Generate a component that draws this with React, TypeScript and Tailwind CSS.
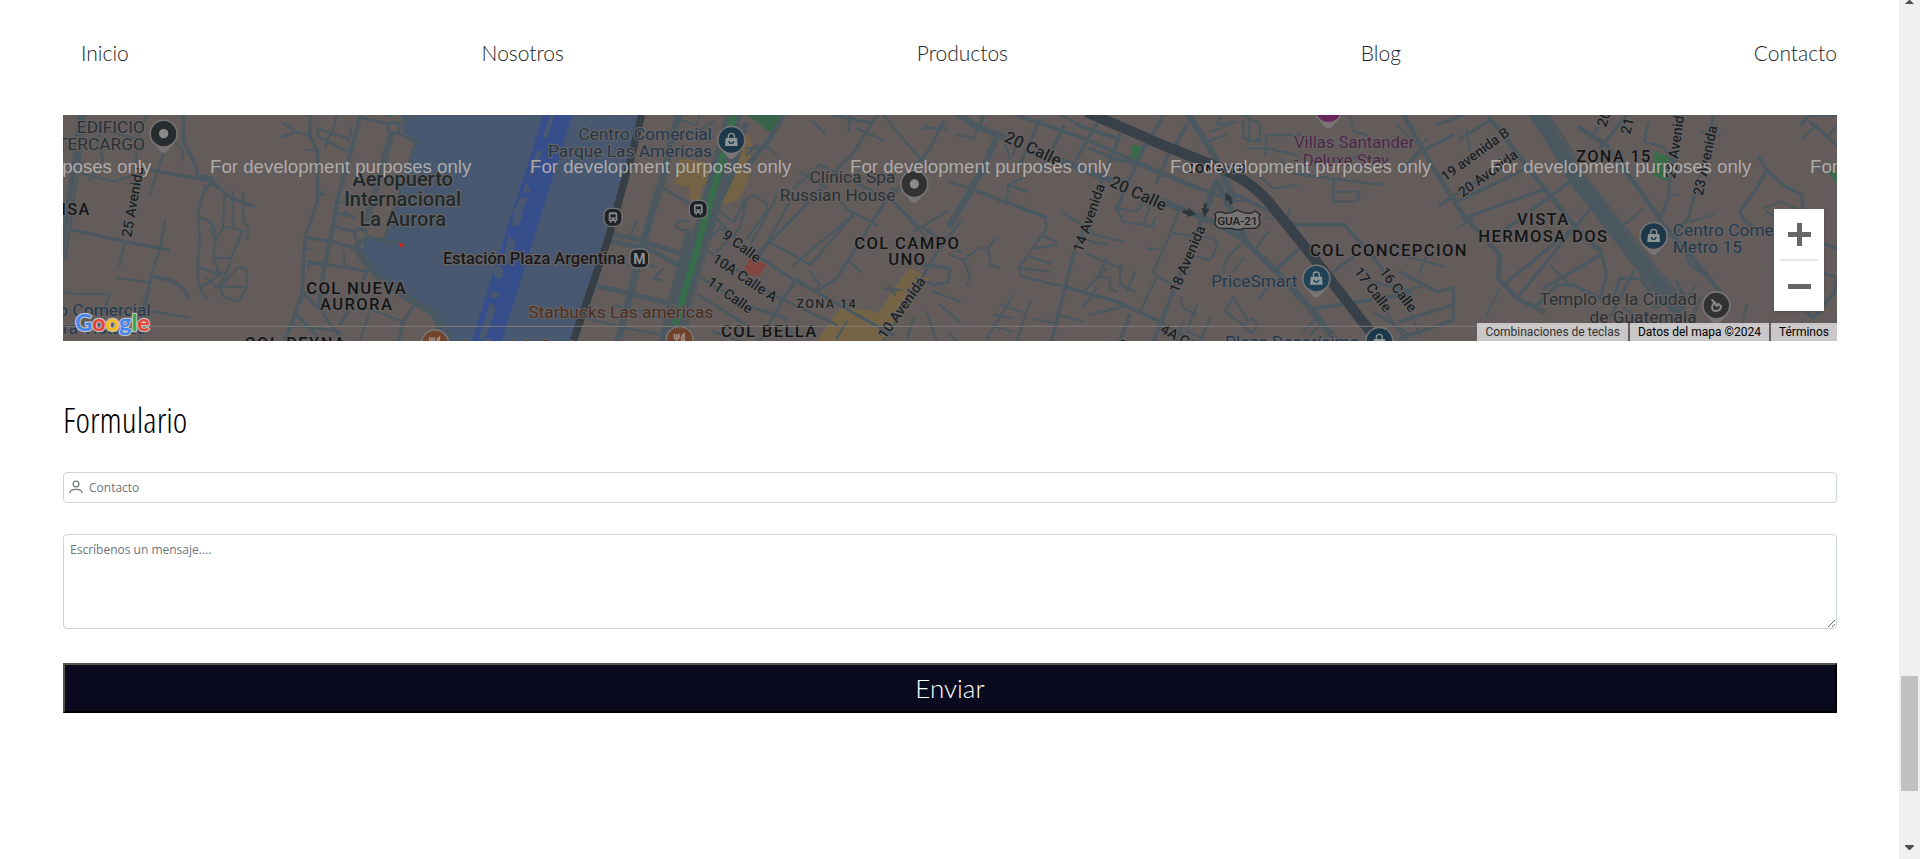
const links = ["Inicio", "Nosotros", "Productos", "Blog", "Contacto"];

type RoadSet = { x: number; w: number; d: string };

/* Streets, grouped by map section (x offset) and stroke width. */
const roads: RoadSet[] = [
  { x: 0, w: 26, d: "M95 30L83 140L65 260L50 370L39 450" },
  { x: 0, w: 13, d: "M929 40L900 150L865 270L848 370L822 490L808 600" },
  { x: 0, w: 20, d: "M1030 68L1018 110L985 225L955 330L932 390M932 390L920 430L945 470L990 520L1050 565L1150 625L1168 660L1155 708" },
  { x: 0, w: 10, d: "M929 36L975 48L1030 62M1050 55L1090 30M1045 85L1097 112L1060 230L1005 400M945 392L1000 406L1050 416M400 30V105L440 188V208L482 220L520 262L549 282L611 304M482 220L486 235M300 195L482 228M60 373L225 410L355 435M768 397L848 410L910 428M775 470L905 490L945 498M756 560L815 620L880 708M735 625L790 680L808 708M950 500L895 620L870 655M1090 605L1060 650L1045 708M780 30V95L802 135V290L765 397L756 560L735 625L705 708M848 363L915 380" },
  { x: 0, w: 7, d: "M290 30L268 75L255 190M165 55L140 110L160 165L120 225M105 60L255 100M75 200L190 230L300 195M340 145L300 265M345 345L330 430L305 510L290 590L270 708M225 410L208 482M203 518L300 533M300 533L280 600M39 560L75 566L178 568M178 568L160 620M300 618L417 638M370 110L400 135L395 165M482 235C440 280 440 340 450 400L443 470C445 510 440 550 470 580M482 235L525 265L518 370L497 405L490 460L543 458L575 385M549 262V366M518 366L549 369L580 380M580 265V350L597 370L590 402M445 335L480 350L497 380M497 405L480 370M490 460L510 510L445 485M510 510L455 545M543 458L530 505L500 550L470 518M530 505L500 500M565 485L590 495V545L565 590L520 575L510 545L565 485M510 545L590 545M443 330L465 240M694 97L740 82L775 90M740 82L700 55M802 70L895 100M805 72L803 95L895 140M840 85L825 130M860 30L845 90M905 65L895 110M768 135H803M855 325L910 335M860 330L890 320L910 340M765 430L785 432M775 480L795 475L815 480M775 490V470M808 257L823 270H808M880 440L885 480M870 290L905 300M720 660L870 680M756 560V590M980 530L960 620L930 708M925 600L1060 650M1168 620L1200 700" },
  { x: 0, w: 12, d: "M310 515C380 525 400 545 415 577" },

  { x: 1350, w: 50, d: "M700 30L665 160L585 460L540 600L520 708" },
  { x: 1350, w: 22, d: "M535 30L490 210L430 410L385 590L355 708M735 60L690 220L655 290L600 480L570 590L548 708M565 390L545 470L500 650L490 708" },
  { x: 1350, w: 15, d: "M325 385L400 400L540 445L575 465M325 408L440 430L535 480M300 30H270M850 30L810 100L760 160L735 190M290 543L450 580L560 610" },
  { x: 1350, w: 9, d: "M490 250L590 310L650 340L735 430L800 470L880 525L950 562L1090 640L1180 690M610 430L720 500L820 570L1010 660M605 520L735 600L860 640M595 570L740 660M880 535L810 650L780 708M840 590L880 540M1180 250L1010 520L950 560M1330 50L1290 130L1180 270M1115 55L1060 145L995 210L890 330L770 450M1055 320L1130 360M1115 55L1000 30M960 180L1180 290L1240 350L1380 440M1380 350L1300 460L1220 600L1150 708M1250 480L1290 480L1350 490L1345 530L1300 540L1250 520" },
  { x: 1350, w: 7, d: "M600 30L590 60L540 45M640 50L590 80M530 80L640 95M410 350L390 390M490 490L460 520L485 525M430 475L470 485M565 350C510 335 520 385 570 375M630 400L660 370L680 380M650 310L700 350L740 280L760 270L800 295V320L740 400M705 350L730 290M830 275L750 420M870 290L780 450M940 50L975 85M1050 30L1045 80M1070 70L1150 105M1110 60L1140 20M1270 70L1340 70M1150 30L1250 150L1310 195M1275 60L1290 70M960 180L880 250M900 200L980 250M1020 290L1060 330L930 480M1060 330L880 480M815 415L935 480M740 280L720 370L650 440M890 520L945 560L960 540L930 500M1050 470L1080 500M1150 550L1200 555M1170 540L1185 570M1230 350L1275 390L1260 430M1340 320L1240 380M290 540L260 600M570 610L540 680M300 460L430 490M340 600L500 640M260 640L380 670L490 690M850 640L880 690M640 680L720 708M1040 650L1010 700M1240 640L1220 700M1280 620L1310 708M1320 600L1380 650M1300 560L1380 590M740 130L810 130M770 120L740 150M830 150L800 120" },

  { x: 2700, w: 19, d: "M25 30L80 65L160 95M330 165L390 190L480 225M640 290L800 355L870 395L980 500L1080 610L1160 708M715 30L760 100L800 165L850 280M140 95L100 190L60 260L0 360M800 230L755 345M800 230L890 410" },
  { x: 2700, w: 11, d: "M200 30L400 100L560 170L700 230L825 280M270 45L200 200M340 65L280 190M440 55L380 160M380 60L500 100M510 90L455 230L370 450L305 708M585 120L500 310M640 30L590 120M655 150L620 230M710 60L670 130M590 190L740 250M840 260L1040 360M345 545L500 590L630 650L730 708M755 345L690 510L630 660L610 708M540 630L510 708M1045 360L1180 358L1260 440L1380 620M980 490L1050 430M1150 500L1210 455M1090 610L1230 590L1380 565M420 130L490 160L590 185M100 30L90 60M60 250L150 285L285 335" },
  { x: 2700, w: 7, d: "M20 90L70 100L85 70M165 120L180 160M200 110L190 150M0 232L60 250M285 335L290 370L205 490L215 515L345 545M205 490L300 500M240 455L300 475M250 430L320 420M285 395L320 410M170 290L175 240L230 260M175 240L215 220M340 325L430 380M385 400L470 420M400 380L520 410M410 445L520 495M470 460L440 520M470 490L400 560M500 310L560 320L600 270M500 310L520 350L605 365L615 340M580 360L600 300M690 310L655 400L610 500L620 515L575 610M595 430L625 435M620 515L670 540M440 515L480 520V550L500 560M400 605L440 550M420 630L520 605M510 480V540L555 560M555 500L530 560M0 450L40 465L85 430H115L135 400M115 430L122 480L145 488M40 465L60 510L50 540M190 570L110 700M150 600L215 620M135 630L190 640M125 660L185 680M240 590L200 708M250 640L310 655M330 630L400 650M670 385L790 400L805 420L780 465L740 455M850 575L825 620L880 660L905 640L925 660L905 685L880 660M850 575L890 640M690 580L700 610L740 630M740 600L710 680L760 700M875 30L930 55V110L880 100V50M900 40L895 110M930 100L910 110M810 35L800 60L860 50M780 80L840 60M770 110L830 90M950 90H1050M950 90L945 150M895 130H950L1040 150M925 210L970 250L1040 240M990 160L1010 200L1060 210L1300 240M1150 220L1150 290L1220 290L1230 260L1160 260M950 340L1010 340L1020 310M850 290L900 285L940 310M820 500L830 460L870 420M850 500L880 460M910 440L955 380M930 580L950 550M1230 520L1380 560M1060 680L1110 630M1080 690L1120 650M1100 170H1180L1230 150M1270 620L1380 690M1300 610L1370 708M330 30L390 60M1200 30L1210 80L1250 90M1340 60L1380 100M0 690L20 708M780 640L750 708M700 650L680 708" },

  { x: 4050, w: 54, d: "M415 30L470 110L540 230L640 360L740 490L830 600" },
  { x: 4050, w: 14, d: "M10 30L100 190L190 330L300 450M270 40L370 170L440 260L540 380L590 430M300 450L295 520L350 580L430 620M540 70L620 120L700 230L780 340M780 350L870 450L960 560" },
  { x: 4050, w: 10, d: "M110 60L190 30M160 90L60 140L0 200M265 50L180 100M350 150L120 300M380 190L170 290M440 250L190 340M510 230L280 400M580 300L350 580M520 370L310 540M600 450L430 550M600 430L620 510L600 580L520 540H470L410 600M680 30L600 130M780 340L805 280L815 160M940 30L905 190L865 340L830 380M1100 195L1070 250L1020 320L1030 345L1060 365M1100 195L1150 240L1205 270L1210 310M1075 155L1100 195M0 500L110 560L160 550V645L0 700M0 650L160 600M850 420L870 480L920 510M830 530L850 570L760 610M1200 330L1250 410L1310 430M1225 490L1305 515V560L1240 640L1200 600L1140 550M1230 50L1311 120M1205 60L1225 30H1311M640 580L660 520L720 520L750 560M700 500L640 620L590 680M870 650L900 580" },
  { x: 4050, w: 6, d: "M745 55L730 110L790 125L820 175M740 80L735 110M950 60L930 140M800 150L830 170M810 270H835M880 270L910 260M870 350L940 330M1090 310L1140 290L1190 310M960 90L900 80M1100 320L1130 340M560 270L660 370M660 370L730 310M200 70L210 140M600 60L570 100M80 100L30 170M170 370L220 340M0 450L135 485M80 450L60 500M10 560L80 540M20 600L60 690M300 550L260 630M450 480L500 530M670 610L740 650M860 580L890 540M1040 600L1020 690M1250 60L1210 100M1311 60L1280 100M1180 470L1120 500" },
];

type Label = {
  x: number;
  y: number;
  t: string[];
  s?: number;
  c?: string;
  a?: "start" | "middle" | "end";
  r?: number;
  w?: number;
  sp?: number;
  lh?: number;
};

const BLUE = "#24384d";
const GREY = "#2b3033";
const DARK = "#141516";
const STREET = "#1c2225";

const labels: Label[] = [
  { x: 285, y: 83, t: ["EDIFICIO", "TERCARGO"], a: "end", c: GREY },
  { x: 302, y: 634, t: ["Centro Comercial"], a: "end", c: BLUE },
  { x: 286, y: 688, t: ["Terra Vistares"], a: "end", c: BLUE },
  { x: 122, y: 330, t: ["ISA"], a: "end", w: 500, sp: 4, s: 49 },
  { x: 1058, y: 242, t: ["Aeropuerto", "Internacional", "La Aurora"], a: "middle", s: 60, c: "#20292c", w: 500, lh: 60 },
  { x: 920, y: 567, t: ["COL NUEVA", "AURORA"], a: "middle", w: 500, sp: 4, lh: 49, s: 50 },
  { x: 737, y: 733, t: ["COL REYNA"], a: "middle", w: 500, sp: 5, s: 49 },
  { x: 244, y: 398, t: ["25 Avenida"], r: -80, s: 43, c: STREET, w: 500 },
  { x: 1726, y: 476, t: ["Estación Plaza Argentina"], a: "end", s: 49, w: 500, c: "#17191c" },
  { x: 1986, y: 104, t: ["Centro Comercial", "Parque Las Américas"], a: "end", c: BLUE },
  { x: 2536, y: 235, t: ["Clínica Spa", "Russian House"], a: "end", c: GREY },
  { x: 1435, y: 640, t: ["Starbucks Las américas"], c: "#4d3022" },
  { x: 1225, y: 740, t: ["Joe's club Centro sede"], c: "#4d3022" },
  { x: 2158, y: 696, t: ["COL BELLA"], a: "middle", w: 500, sp: 4, s: 50 },
  { x: 2572, y: 431, t: ["COL CAMPO", "UNO"], a: "middle", w: 500, sp: 4, lh: 49, s: 50 },
  { x: 2330, y: 610, t: ["ZONA 14"], a: "middle", s: 38, w: 500, sp: 4, c: "#222628" },
  { x: 2014, y: 396, t: ["9 Calle"], r: 37, s: 43, c: STREET, w: 500 },
  { x: 1984, y: 468, t: ["10A Calle A"], r: 34, s: 43, c: STREET, w: 500 },
  { x: 1968, y: 538, t: ["11 Calle"], r: 35, s: 43, c: STREET, w: 500 },
  { x: 2506, y: 704, t: ["10 Avenida"], r: -55, s: 43, c: STREET, w: 500 },
  { x: 2860, y: 108, t: ["20 Calle"], r: 25, s: 50, c: STREET, w: 500 },
  { x: 3176, y: 242, t: ["20 Calle"], r: 25, s: 50, c: STREET, w: 500 },
  { x: 3096, y: 444, t: ["14 Avenida"], r: -71, s: 43, c: STREET, w: 500 },
  { x: 3384, y: 566, t: ["18 Avenida"], r: -67, s: 43, c: STREET, w: 500 },
  { x: 3500, y: 203, t: ["ZONA 10"], a: "middle", s: 38, w: 500, sp: 4 },
  { x: 3732, y: 130, t: ["Villas Santander", "- Deluxe Stay"], c: "#4d2848", s: 50 },
  { x: 3742, y: 545, t: ["PriceSmart"], a: "end", c: BLUE },
  { x: 3928, y: 730, t: ["Plaza Decorísima"], a: "end", c: BLUE },
  { x: 4254, y: 453, t: ["COL CONCEPCION"], a: "end", w: 500, sp: 4, s: 50 },
  { x: 3910, y: 500, t: ["17 Calle"], r: 53, s: 43, c: STREET, w: 500 },
  { x: 3986, y: 500, t: ["16 Calle"], r: 53, s: 43, c: STREET, w: 500 },
  { x: 3328, y: 680, t: ["4A Calle"], r: 30, s: 43, c: STREET, w: 500 },
  { x: 3222, y: 740, t: ["la"], r: -65, s: 43, c: STREET, w: 500 },
  { x: 4186, y: 230, t: ["19 avenida B"], r: -36, s: 42, c: STREET, w: 500 },
  { x: 4238, y: 278, t: ["20 Avenida"], r: -36, s: 42, c: STREET, w: 500 },
  { x: 4692, y: 172, t: ["ZONA 15"], a: "middle", w: 500, sp: 4, s: 49 },
  { x: 4480, y: 361, t: ["VISTA", "HERMOSA DOS"], a: "middle", w: 500, sp: 4, lh: 49, s: 50 },
  { x: 4668, y: 68, t: ["20 Avenida"], r: -72, s: 43, c: STREET, w: 500 },
  { x: 4740, y: 90, t: ["21 Avenida"], r: -76, s: 43, c: STREET, w: 500 },
  { x: 4876, y: 222, t: ["22 Avenida"], r: -82, s: 43, c: STREET, w: 500 },
  { x: 4958, y: 274, t: ["23 Avenida"], r: -78, s: 43, c: STREET, w: 500 },
  { x: 4868, y: 393, t: ["Centro Comercial", "Metro 15"], c: BLUE },
  { x: 4940, y: 601, t: ["Templo de la Ciudad", "de Guatemala"], a: "end", c: GREY },
];

function MapLabel({ x, y, t, s = 52, c = DARK, a = "start", r = 0, w = 400, sp = 0, lh = 52 }: Label) {
  return (
    <text
      transform={`translate(${x} ${y}) rotate(${r})`}
      fontSize={s}
      fontWeight={w}
      fill={c}
      textAnchor={a}
      letterSpacing={sp}
      stroke="#666262"
      strokeWidth="7"
      strokeLinejoin="round"
      paintOrder="stroke"
    >
      {t.map((line, i) => (
        <tspan key={line} x="0" dy={i ? lh : 0}>
          {line}
        </tspan>
      ))}
    </text>
  );
}

function Pin({ x, y, c, kind }: { x: number; y: number; c: string; kind: "dot" | "bag" | "food" | "pray" }) {
  return (
    <g transform={`translate(${x} ${y})`}>
      <path d="M0 57C-10 57-16 44-30 31A43 43 0 1 1 30 31C16 44 10 57 0 57Z" fill="#777473" />
      <circle r="38" fill={c} />
      {kind === "dot" && <circle r="14" fill="#8b8988" />}
      {kind === "bag" && (
        <g>
          <path d="M-17-6H17L19 18H-19Z" fill="#8f9497" />
          <path d="M-9-5V-11A9 9 0 0 1 9-11V-5" fill="none" stroke="#8f9497" strokeWidth="4" />
          <path d="M-7 3A7 7 0 0 0 7 3" fill="none" stroke={c} strokeWidth="4" />
        </g>
      )}
      {kind === "food" && (
        <path d="M-16-18V-6M-9-18V-6M-2-18V-6M-16-7Q-9 2-2-7M-9 0V20M13 20V-18Q4-12 6 2H13" fill="none" stroke="#a08d83" strokeWidth="5" />
      )}
      {kind === "pray" && (
        <path d="M-14-18L-6-8L-12 2Q-16 16-2 17Q14 16 14 2L6-4L0 4M-4-10L0 2" fill="none" stroke="#8b8988" strokeWidth="6" />
      )}
    </g>
  );
}

function BusStop({ x, y }: { x: number; y: number }) {
  return (
    <g transform={`translate(${x} ${y})`}>
      <rect x="-27" y="-27" width="54" height="54" rx="20" fill="#1f2328" stroke="#777473" strokeWidth="4" />
      <path d="M-13 11V-10Q-13-15-8-15H8Q13-15 13-10V11H9V16H4V11H-4V16H-9V11Z" fill="#85878a" />
      <path d="M-8-9H8V0H-8Z" fill="#1f2328" />
      <path d="M-8 5H-4M4 5H8" stroke="#1f2328" strokeWidth="4" />
    </g>
  );
}

function CityMap() {
  return (
    <svg
      viewBox="39 30 5322 678"
      preserveAspectRatio="xMidYMid slice"
      className="block h-full w-full"
      fontFamily="Roboto, 'Noto Sans', sans-serif"
      role="img"
      aria-label="Mapa"
    >
      <rect x="39" y="30" width="5322" height="678" fill="#635c5b" />

      <path d="M1055 30L1058 80L1098 108L1055 250L1005 400L945 402L935 440L1000 520L1060 565L1150 620L1168 660L1155 708H1570L1670 400L1768 30Z" fill="#475870" />
      <path d="M1480 30H1567L1355 708H1265L1372 370Z" fill="#374e8c" />
      <g fill="#475870">
        <path d="M1515 30L1490 100L1478 98L1500 30Z" />
        <path d="M1462 135L1478 140L1443 215L1436 212Z" />
        <path d="M1428 230L1418 265L1442 262Z" />
        <path d="M1410 275L1435 280L1405 340L1388 335Z" />
        <path d="M1392 310Q1425 320 1415 345Q1400 370 1386 362Z" />
        <path d="M1375 395Q1400 400 1393 430L1373 480L1355 478Z" />
        <ellipse cx="1346" cy="502" rx="14" ry="20" />
        <ellipse cx="1333" cy="570" rx="14" ry="10" />
        <path d="M1320 595Q1342 600 1334 620L1305 705L1285 700Z" />
      </g>
      <path d="M2090 30H2190L2165 85Z" fill="#386549" />
      <path d="M3249 118L3278 125L3263 166L3240 155Z" fill="#396b4c" />
      <path d="M4812 138L4868 160L4855 230L4808 210Z" fill="#396b4c" />
      <path d="M5330 195L5361 205V238Z" fill="#396b4c" />
      <path d="M1012 30H1030V36H1012Z" fill="#396b4c" />
      <g fill="#746445">
        <path d="M1890 160L1960 170L2000 195L1975 230L1955 245L1945 290L1915 280L1920 250L1872 235Z" />
        <path d="M2085 65L2105 110L2095 230L2060 285Q2035 300 2010 293L2050 160L2085 120Z" />
        <path d="M2580 490L2638 520L2510 708H2300L2370 610L2450 615L2485 625L2555 520Z" />
      </g>
      <path d="M2100 455L2150 478L2125 515L2078 505Z" fill="#83453f" />

      <g fill="none" stroke="#4c5860" strokeLinejoin="round" strokeLinecap="round">
        {roads.map((r) => (
          <path key={`${r.x}-${r.w}`} d={r.d} strokeWidth={r.w} transform={`translate(${r.x} 0)`} />
        ))}
      </g>
      <g fill="#635c5b" stroke="#4c5860" strokeWidth="10">
        <circle cx="1030" cy="68" r="17" />
        <circle cx="932" cy="390" r="18" />
      </g>
      <g fill="none" stroke="#635c5b" strokeWidth="3">
        <path d="M440 30L540 190L660 350L760 480L840 585" transform="translate(4050 0)" />
        <path d="M83 180L60 330L45 430" />
        <path d="M1980 400L1895 700" />
      </g>

      <path d="M2052 30L2015 170L1930 470L1890 610L1875 660" fill="none" stroke="#386d4c" strokeWidth="20" />
      <path d="M1775 30L1740 170L1675 400L1570 708" fill="none" stroke="#363e46" strokeWidth="22" />
      <path d="M3110 22L3200 60L3350 125L3500 185Q3600 225 3655 290L3720 370L3800 470L3930 640L3970 690" fill="none" stroke="#38414a" strokeWidth="31" />
      <g fill="#2c373c" stroke="#2c373c" strokeWidth="5">
        <path d="M3402 317L3420 322L3418 314L3434 328L3414 332L3417 327L3400 322Z" />
        <path d="M3468 298L3466 314L3474 314L3464 330L3458 312L3463 313L3464 298Z" />
        <path d="M3542 296L3536 282L3528 284L3530 268L3544 280L3539 281L3546 294Z" />
      </g>

      {labels.map((l) => (
        <MapLabel key={`${l.x}-${l.y}`} {...l} />
      ))}

      <path d="M3500 322Q3512 318 3522 324Q3542 328 3562 315Q3582 328 3604 324L3616 318L3630 328Q3624 338 3630 350Q3630 370 3606 370H3582Q3564 378 3546 370H3520Q3494 370 3495 350Q3500 338 3494 330Z" fill="#777473" stroke="#23282c" strokeWidth="4" />
      <text x="3562" y="359" textAnchor="middle" fontSize="35" fontWeight="500" fill="#1b1f22">
        GUA-21
      </text>

      <Pin x={341} y={86} c="#272c2f" kind="dot" />
      <Pin x={2593} y={237} c="#303234" kind="dot" />
      <Pin x={2044} y={105} c="#1d384a" kind="bag" />
      <Pin x={3799} y={521} c="#1f4257" kind="bag" />
      <Pin x={3988} y={708} c="#1d384a" kind="bag" />
      <Pin x={4811} y={393} c="#1d384a" kind="bag" />
      <Pin x={1155} y={715} c="#70432b" kind="food" />
      <Pin x={1889} y={705} c="#70432b" kind="food" />
      <Pin x={4999} y={601} c="#303234" kind="pray" />
      <Pin x={3835} y={13} c="#6a275c" kind="dot" />
      <BusStop x={1689} y={337} />
      <BusStop x={1945} y={313} />
      <rect x="1740" y="432" width="56" height="57" rx="18" fill="#1d2024" stroke="#777473" strokeWidth="4" />
      <text x="1768" y="476" textAnchor="middle" fontSize="42" fontWeight="700" fill="#929294">
        M
      </text>
      <circle cx="1053" cy="420" r="6" fill="#e01f1f" />

      <path d="M39 664H5361" stroke="#817b7a" strokeWidth="3" />
      <g fontFamily="'Liberation Sans', Arial, sans-serif" fontSize="56" fill="#b5b1b0" fillOpacity="0.95">
        {[-480, 480, 1440, 2400, 3360, 4320, 5280].map((x) => (
          <text key={x} x={x} y="205">
            For development purposes only
          </text>
        ))}
      </g>

      <text
        x="76"
        y="677"
        fontFamily="Lato, sans-serif"
        fontWeight="700"
        fontSize="70"
        stroke="#c4c2c1"
        strokeWidth="7"
        strokeLinejoin="round"
        paintOrder="stroke"
      >
        <tspan fill="#4285f4">G</tspan>
        <tspan fill="#ea4335">o</tspan>
        <tspan fill="#fbbc04">o</tspan>
        <tspan fill="#4285f4">g</tspan>
        <tspan fill="#34a853">l</tspan>
        <tspan fill="#ea4335">e</tspan>
      </text>
    </svg>
  );
}

function Scrollbar() {
  return (
    <div aria-hidden="true" className="sticky top-0 flex h-screen w-[21px] shrink-0 flex-col items-center bg-[#f0f0f0]">
      <svg className="h-1 w-[9px]" viewBox="0 0 9 4">
        <path d="M4 0H5L9 4H0Z" fill="#505050" />
      </svg>
      <div className="grow-[672]" />
      <div className="w-[17px] grow-[115] bg-[#c1c1c1]" />
      <div className="grow-[54]" />
      <svg className="mb-[9px] h-[5px] w-[9px]" viewBox="0 0 9 5">
        <path d="M0 0H9V1L5 5H4L0 1Z" fill="#505050" />
      </svg>
    </div>
  );
}

export default function App() {
  return (
    <div className="flex min-h-screen bg-white">
      <div className="min-w-0 flex-1 pr-[62px] pl-[63px]">
        <nav className="flex h-[115px] items-start justify-between pt-10 pl-[18px] font-[Lato,sans-serif] text-[21px] leading-[26px] font-light text-[#212529]">
          {links.map((link) => (
            <a key={link} href={`#${link.toLowerCase()}`}>
              {link}
            </a>
          ))}
        </nav>

        <section className="relative h-[226px] overflow-hidden">
          <CityMap />
          <div className="absolute right-[13px] bottom-[30px] flex w-[50px] flex-col bg-white shadow">
            <button type="button" aria-label="Acercar" className="flex h-[51px] items-center justify-center">
              <svg viewBox="0 0 23 23" className="size-[23px]">
                <path d="M9 0H14V9H23V14H14V23H9V14H0V9H9Z" fill="#666" />
              </svg>
            </button>
            <div className="mx-1.5 -mt-px h-0.5 bg-[#e6e6e6]" />
            <button type="button" aria-label="Alejar" className="flex h-[50px] items-center justify-center">
              <svg viewBox="0 0 23 23" className="size-[23px]">
                <path d="M0 9H23V14H0Z" fill="#666" />
              </svg>
            </button>
          </div>
          <div className="absolute right-0 bottom-0 flex h-[18px] gap-0.5 font-[Roboto,sans-serif] text-[12px] leading-[18px] text-black">
            <button type="button" className="bg-[#f5f5f5]/70 px-2 text-[#333]">
              Combinaciones de teclas
            </button>
            <span className="bg-[#f5f5f5]/70 px-2">Datos del mapa ©2024</span>
            <a href="#terminos" className="bg-[#f5f5f5]/70 px-2">
              Términos
            </a>
          </div>
        </section>

        <form className="pt-[54px]" onSubmit={(e) => e.preventDefault()}>
          <h2 className="font-['Open_Sans_Condensed_Light','Roboto_Condensed','Open_Sans_Condensed',sans-serif] text-[35px] leading-[50px] font-light text-black">
            Formulario
          </h2>
          <div className="mt-[27px] flex h-[31px] items-center rounded border border-[#ced4da] pl-[5px] text-[#6c757d]">
            <svg viewBox="0 0 14 14" className="mb-0.5 size-3.5" fill="none" stroke="currentColor" strokeWidth="1.2" aria-hidden="true">
              <circle cx="7" cy="4" r="2.9" />
              <path d="M.8 13.2C.8 10.6 3 9.3 7 9.3S13.200 10.6 13.200 13.200" />
            </svg>
            <input
              type="text"
              aria-label="Contacto"
              placeholder="Contacto"
              className="ml-1.5 min-w-0 flex-1 bg-transparent font-['Open_Sans',sans-serif] text-[12px] outline-none placeholder:text-[#6c757d]"
            />
          </div>
          <textarea
            aria-label="Mensaje"
            placeholder="Escríbenos un mensaje...."
            className="mt-[31px] block h-[95px] w-full rounded border border-[#ced4da] px-1.5 py-1 font-['Open_Sans',sans-serif] text-[12px] leading-[21px] outline-none placeholder:text-[#6c757d]"
          />
          <button
            type="submit"
            className="mt-[34px] block h-[50px] w-full border-2 border-t-[#555550] border-r-black border-b-black border-l-[#555550] bg-[#0a0a1e] font-[Lato,sans-serif] text-[26px] leading-[46px] font-light text-white"
          >
            Enviar
          </button>
        </form>
      </div>
      <Scrollbar />
    </div>
  );
}
